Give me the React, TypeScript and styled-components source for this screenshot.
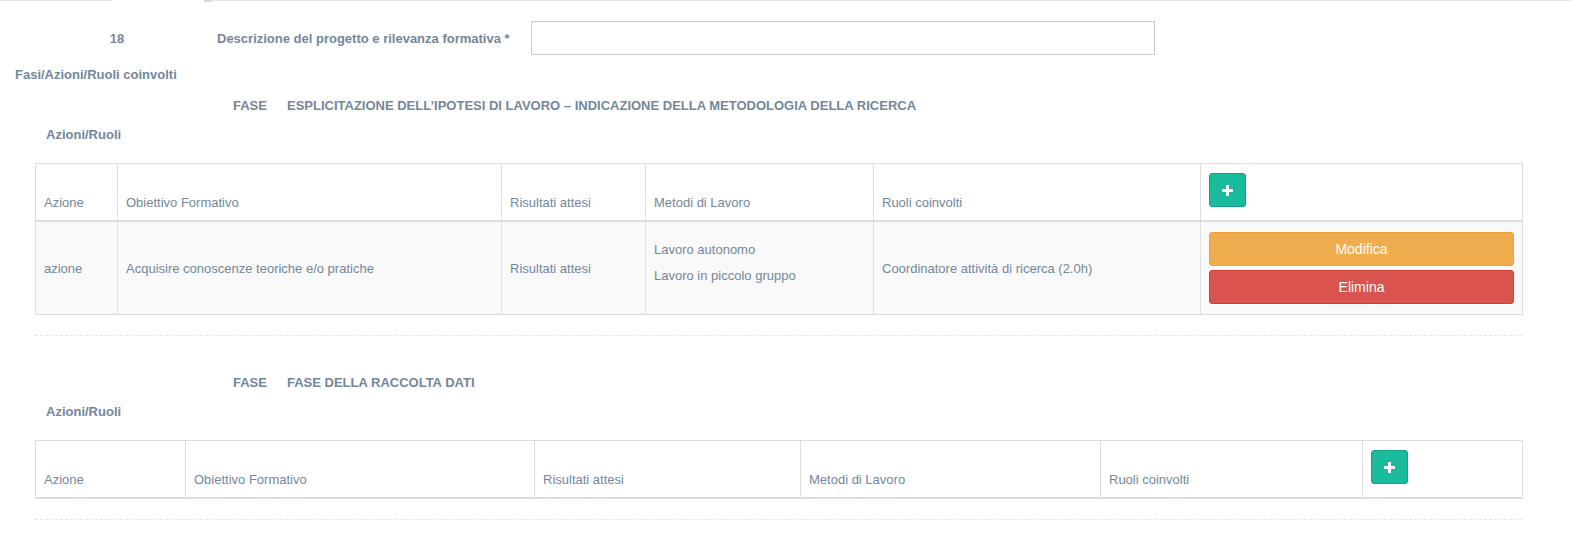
import React from "react";
import styled, { createGlobalStyle } from "styled-components";

const Global = createGlobalStyle`
  html, body { margin: 0; padding: 0; background: #fff; }
  body {
    font-family: "Liberation Sans", Arial, sans-serif;
    font-size: 13px;
    line-height: 19px;
    color: #73879C;
  }
  * { box-sizing: border-box; }
`;

const Page = styled.div`
  width: 1591px;
  padding-bottom: 20px;
`;

const TabRule = styled.div`
  display: flex;
  height: 2px;
  padding-right: 20px;
`;

const RuleSegment = styled.div<{ $w?: number }>`
  ${(p) => (p.$w ? `width: ${p.$w}px;` : "flex: 1;")}
  height: 1px;
  background: #E3E6EA;
`;

const RuleGap = styled.div<{ $w: number }>`
  width: ${(p) => p.$w}px;
`;

const RuleMark = styled.div`
  width: 8px;
  height: 2px;
  background: #D5D8DC;
`;

const FormRow = styled.div`
  display: flex;
  align-items: center;
  height: 34px;
  margin-top: 19px;
`;

const NumberCell = styled.div`
  width: 217px;
  padding-left: 17px;
  text-align: center;
  font-weight: bold;
`;

const FieldLabel = styled.label`
  flex: none;
  white-space: nowrap;
  font-weight: bold;
`;

const TextInput = styled.input`
  margin-left: 21px;
  width: 624px;
  height: 34px;
  border: 1px solid #ccc;
  background: #fff;
  font: inherit;
  padding: 6px 12px;
  outline: none;
`;

const SectionLabel = styled.div`
  margin-top: 10px;
  padding-left: 15px;
  font-weight: bold;
  height: 19px;
`;

const Phases = styled.div`
  padding-left: 35px;
  width: 1522px;
`;

const PhaseBlock = styled.section<{ $first?: boolean }>`
  padding-top: ${(p) => (p.$first ? 12 : 37)}px;
`;

const PhaseTitle = styled.div`
  display: flex;
  gap: 20px;
  padding-left: 198px;
  font-weight: bold;
  text-transform: uppercase;
  height: 19px;
`;

const ActionsLabel = styled.div`
  margin-top: 10px;
  padding-left: 11px;
  font-weight: bold;
  height: 19px;
`;

const Table = styled.table`
  margin-top: 19px;
  width: 1487px;
  border-collapse: collapse;
  border: 1px solid #ddd;
  table-layout: fixed;
`;

const Col = styled.col<{ $w: number }>`
  width: ${(p) => p.$w}px;
`;

const HeadCell = styled.th`
  text-align: left;
  font-weight: normal;
  vertical-align: bottom;
  padding: 9px 8px 8px;
  border: 1px solid #ddd;
  border-bottom: 2px solid #ddd;
  line-height: 19px;
`;

const BodyRow = styled.tr`
  background: #f9f9f9;
`;

const BodyCell = styled.td`
  vertical-align: middle;
  padding: 8px;
  border: 1px solid #ddd;
  line-height: 19px;
`;

const ActionCell = styled(BodyCell)`
  padding: 10px 8px;
`;

const CellLine = styled.p`
  margin: 0 0 10px;
  line-height: 16px;
`;

const AddButton = styled.button`
  display: flex;
  align-items: center;
  justify-content: center;
  width: 37px;
  height: 34px;
  margin-bottom: 5px;
  padding: 0;
  background: #1ABB9C;
  border: 1px solid #169F85;
  border-radius: 3px;
  cursor: pointer;
`;

const BlockButton = styled.button<{ $tone: "warning" | "danger" }>`
  display: block;
  width: 100%;
  height: 34px;
  font-family: "Liberation Sans", Arial, sans-serif;
  font-size: 14px;
  color: #fff;
  border-radius: 3px;
  cursor: pointer;
  background: ${(p) => (p.$tone === "warning" ? "#F0AD4E" : "#D9534F")};
  border: 1px solid ${(p) => (p.$tone === "warning" ? "#EEA236" : "#D43F3A")};
  & + & {
    margin-top: 4px;
  }
`;

const Divider = styled.div`
  margin-top: 20px;
  width: 1487px;
  border-top: 1px dashed #e5e5e5;
`;

const PlusIcon = () => (
  <svg width="11" height="11" viewBox="0 0 11 11" aria-hidden="true">
    <rect x="4" y="0" width="3" height="11" fill="#fff" />
    <rect x="0" y="4" width="11" height="3" fill="#fff" />
  </svg>
);

const headers = [
  "Azione",
  "Obiettivo Formativo",
  "Risultati attesi",
  "Metodi di Lavoro",
  "Ruoli coinvolti",
];

type Row = {
  azione: string;
  obiettivo: string;
  risultati: string;
  metodi: string[];
  ruoli: string;
};

const Phase = ({
  title,
  widths,
  rows,
  first,
}: {
  title: string;
  widths: number[];
  rows: Row[];
  first?: boolean;
}) => (
  <PhaseBlock $first={first}>
    <PhaseTitle>
      <span>FASE</span>
      <span>{title}</span>
    </PhaseTitle>
    <ActionsLabel>Azioni/Ruoli</ActionsLabel>
    <Table>
      <colgroup>
        {widths.map((w, i) => (
          <Col key={i} $w={w} />
        ))}
      </colgroup>
      <thead>
        <tr>
          {headers.map((h) => (
            <HeadCell key={h}>{h}</HeadCell>
          ))}
          <HeadCell>
            <AddButton aria-label="Aggiungi">
              <PlusIcon />
            </AddButton>
          </HeadCell>
        </tr>
      </thead>
      <tbody>
        {rows.map((r, i) => (
          <BodyRow key={i}>
            <BodyCell>{r.azione}</BodyCell>
            <BodyCell>{r.obiettivo}</BodyCell>
            <BodyCell>{r.risultati}</BodyCell>
            <BodyCell>
              {r.metodi.map((m) => (
                <CellLine key={m}>{m}</CellLine>
              ))}
            </BodyCell>
            <BodyCell>{r.ruoli}</BodyCell>
            <ActionCell>
              <BlockButton $tone="warning">Modifica</BlockButton>
              <BlockButton $tone="danger">Elimina</BlockButton>
            </ActionCell>
          </BodyRow>
        ))}
      </tbody>
    </Table>
    <Divider />
  </PhaseBlock>
);

export default function App() {
  return (
    <Page>
      <Global />
      <TabRule>
        <RuleSegment $w={112} />
        <RuleGap $w={92} />
        <RuleMark />
        <RuleSegment />
      </TabRule>
      <FormRow>
        <NumberCell>18</NumberCell>
        <FieldLabel>Descrizione del progetto e rilevanza formativa *</FieldLabel>
        <TextInput type="text" />
      </FormRow>
      <SectionLabel>Fasi/Azioni/Ruoli coinvolti</SectionLabel>
      <Phases>
        <Phase
          first
          title="ESPLICITAZIONE DELL’IPOTESI DI LAVORO – INDICAZIONE DELLA METODOLOGIA DELLA RICERCA"
          widths={[82, 384, 144, 228, 327, 322]}
          rows={[
            {
              azione: "azione",
              obiettivo: "Acquisire conoscenze teoriche e/o pratiche",
              risultati: "Risultati attesi",
              metodi: ["Lavoro autonomo", "Lavoro in piccolo gruppo"],
              ruoli: "Coordinatore attività di ricerca (2.0h)",
            },
          ]}
        />
        <Phase
          title="FASE DELLA RACCOLTA DATI"
          widths={[150, 349, 266, 300, 262, 160]}
          rows={[]}
        />
      </Phases>
    </Page>
  );
}
